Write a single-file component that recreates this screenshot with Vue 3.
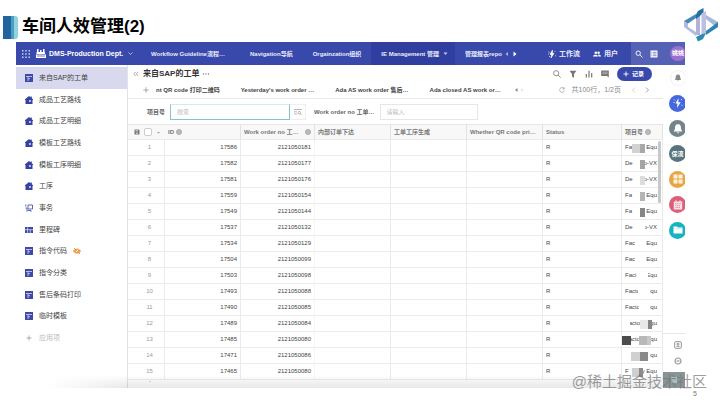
<script setup>
import { ref } from 'vue'

const menu = [
  { label: '来自SAP的工单', icon: 'table' },
  { label: '成品工艺路线', icon: 'house' },
  { label: '成品工艺明细', icon: 'house' },
  { label: '模板工艺路线', icon: 'house' },
  { label: '模板工序明细', icon: 'house' },
  { label: '工序', icon: 'house' },
  { label: '事务', icon: 'cart' },
  { label: '里程碑', icon: 'board' },
  { label: '指令代码', icon: 'table', hidden: true },
  { label: '指令分类', icon: 'table' },
  { label: '售后条码打印', icon: 'table' },
  { label: '临时模板', icon: 'table' },
]
const active = ref(0)
const keyword = ref('')
const orderNo = ref('')

// Each mask is [x, width, colour] within the project cell.
const rows = [
  [17586, 2121050181, 'Fa', 'Equ', [[10, 8, '#d2d2d2'], [18, 5, '#a9a9a9']]],
  [17582, 2121050177, 'De', 'o-VX', [[18, 5, '#a4a4a4']]],
  [17581, 2121050176, 'De', 'o-VX', [[18, 5, '#dcdcdc']]],
  [17559, 2121050154, 'Fa', 'Equ', [[18, 5, '#b5b5b5']]],
  [17549, 2121050144, 'Fa', 'Equ', [[18, 5, '#868686']]],
  [17537, 2121050132, 'De', 'o-VX', [[16, 7, '#ffffff']]],
  [17534, 2121050129, 'Fac', 'Equ', []],
  [17504, 2121050099, 'Fac', 'Equ', []],
  [17503, 2121050098, 'Faci', 'Equ', [[23, 3, '#ffffff']]],
  [17493, 2121050088, 'Facto', 'Equ', [[16, 12, '#ffffff']]],
  [17490, 2121050085, 'Facto', 'Equ', [[0, 3, '#ffffff'], [17, 11, '#ffffff']]],
  [17489, 2121050084, 'Facto', 'Equ', [[0, 8, '#ffffff'], [18, 8, '#e8e8e8'], [26, 4, '#858585']]],
  [17485, 2121050080, 'Facto', 'Equ', [[0, 9, '#4b4b4b'], [17, 8, '#b9b9b9'], [25, 4, '#c9c9c9']]],
  [17471, 2121050086, '', 'Equ', [[9, 9, '#d0d0d0'], [18, 8, '#8a8a8a'], [26, 2, '#ffffff']]],
  [17465, 2121050080, 'F', 'y Equ', [[10, 7, '#cfcfcf'], [17, 4, '#8c8c8c']]],
]
</script>

<template>
  <div class="slide">
    <header class="slide-head">
      <span class="strip"></span>
      <h1>车间人效管理(2)</h1>
      <svg class="logo" viewBox="0 0 34 34" aria-hidden="true">
        <path d="M0 13 4 15v4l8 5v4L0 19z" fill="#b3bbdd" />
        <path d="M0 13 12 6v4L4 15.500z" fill="#4489b8" />
        <path d="M12 7h4v20h-4z" fill="#b1b4da" />
        <path d="M12 6.500 14 3l5.500-3v5L12 11z" fill="#256f9f" />
        <path d="M17.500 5.500 22 3v22l-4.500 3z" fill="#bcc0e2" />
        <path d="M22 7 34 14v2l-4 1.500-8-6.500z" fill="#aab7dc" />
        <path d="M34 14v5l-12 8v-4l8-6z" fill="#2f83b0" />
        <path d="M12 29 17 26.500 22 25l-3 6-5 2.500z" fill="#2e8bad" />
      </svg>
    </header>

    <div class="app">
      <div class="topbar">
        <div class="brand">
          <svg class="i8" viewBox="0 0 8 8" fill="#c9cef0"><path d="M0 0h1.500v1.500H0zM3.200 0h1.500v1.500H3.200zM6.500 0H8v1.500H6.500zM0 3.200h1.500v1.500H0zM3.200 3.200h1.500v1.500H3.200zM6.500 3.200H8v1.500H6.500zM0 6.500h1.500V8H0zM3.200 6.500h1.500V8H3.200zM6.500 6.500H8V8H6.500z" /></svg>
          <svg class="i10" viewBox="0 0 10 10"><path d="M1 0h1.500v3H4V1h1.500v2H7V0h1.500v3H9v2H.5V3H1zM0 5.500h10V9H0z" fill="#fff" /><path d="M2 6v2M4 6v2M6 6v2M8 6v2" stroke="#3949ab" stroke-width=".7" /></svg>
          <strong>DMS-Production Dept.</strong>
          <svg class="i5" viewBox="0 0 5 5"><path d="M.5 1.500 2.500 3.500 4.500 1.500" fill="none" stroke="#cfd3f2" stroke-width=".8" /></svg>
        </div>
        <nav class="tabs">
          <a href="#" class="wide">Workflow Guideline流程…</a>
          <a href="#">Navigation导航</a>
          <a href="#">Orgainzation组织</a>
          <a href="#" class="on">IE Management 管理<svg class="i5" viewBox="0 0 5 5"><path d="M.5 1.500h4L2.500 4z" fill="#c3c8ec" /></svg></a>
          <a href="#" class="last">管理报表repo</a>
          <svg class="arrows" viewBox="0 0 12 6"><path d="M3 1v4L.5 3z" fill="#aeb5e2" /><path d="M8.500.5v5l3-2.500z" fill="#fff" /></svg>
        </nav>
        <a href="#" class="tool"><svg class="i8" viewBox="0 0 8 8"><path d="M4.500 0 2 4.500h1.500L3 8l3-4.700H4.400zM.2 1.800l1.500.7M0 4h1M1 7l1-1M6.500 2 7.500 1M7 5.500l1 .6" fill="#fff" stroke="#fff" stroke-width=".6" /></svg>工作流</a>
        <a href="#" class="tool"><svg class="i8" viewBox="0 0 8 8" fill="#fff"><circle cx="2.800" cy="2.700" r="1.300" /><circle cx="5.600" cy="2.700" r="1.200" /><path d="M0 6.500c0-2.500 5-2.500 5 0zM5.500 6.500c0-1-.3-1.600-.8-2C6.500 4.200 8 5 8 6.500z" /></svg>用户</a>
        <div class="account">
          <button aria-label="搜索"><svg class="i8" viewBox="0 0 8 8" fill="none" stroke="#fff" stroke-width=".9"><circle cx="3.200" cy="3.200" r="2.200" /><path d="M5 5l2.500 2.500" /></svg></button>
          <button aria-label="列表"><svg class="i8" viewBox="0 0 8 8"><path d="M.5.5h7v7h-7z" fill="#fff" /><path d="M3 2.300h3.500M3 4h3.500M3 5.700h3.500M1.300 2.300h1M1.300 4h1M1.300 5.700h1" stroke="#5561b4" stroke-width=".7" /></svg></button>
          <span class="clip"><span class="avatar">姚姚</span></span>
        </div>
      </div>

      <div class="body">
        <aside class="side">
          <ul>
            <li v-for="(m, i) in menu" :key="i">
              <button :class="{ on: active === i }" @click="active = i">
                <svg v-if="m.icon === 'table'" class="i8" viewBox="0 0 8 8"><path d="M0 0h8v8H0z" fill="#3f4aa8" /><path d="M1 2.500h6M3 2.500V7M3 4.700h2" stroke="#d4d7f0" stroke-width=".8" /></svg>
                <svg v-else-if="m.icon === 'house'" class="i8" viewBox="0 0 8 8"><path d="M4 0 5.500 1.200V.5h1.300v1.700L8 3.200V4h-.5v4H.5V4H0v-.8z" fill="#3643a0" /><path d="M4.200 4h1.500v2H4.200z" fill="#dfe2f6" /></svg>
                <svg v-else-if="m.icon === 'cart'" class="i8" viewBox="0 0 8 8" fill="none" stroke="#4c57ae" stroke-width=".9"><path d="M.8.5v2M.5 4h1.500v3.500M3 1h4.500v4H3zM2.500 6.500H6v1.300" /></svg>
                <svg v-else class="i8" viewBox="0 0 8 8"><path d="M0 1h8v6H0z" fill="#3f4aa8" /><path d="M0 3.700h8M2.600 1.500V7M5.300 3.700V7" stroke="#e4e6f7" stroke-width=".7" /></svg>
                <span>{{ m.label }}</span>
                <svg v-if="m.hidden" class="i8" viewBox="0 0 8 8"><path d="M0 4c2-3.500 6-3.500 8 0C6 7.500 2 7.500 0 4z" fill="#f0a04a" /><circle cx="4" cy="4" r="1.200" fill="#fff" /><path d="M1 1l6 6" stroke="#d98220" stroke-width=".8" /></svg>
              </button>
            </li>
            <li>
              <button class="add"><svg class="i8" viewBox="0 0 8 8"><path d="M4 1.500v5M1.500 4h5" stroke="#999" stroke-width=".8" /></svg><span>应用项</span></button>
            </li>
          </ul>
        </aside>

        <main class="main">
          <div class="title-row">
            <svg class="i6" viewBox="0 0 6 6"><path d="M2.800.8.8 3l2 2.200M5.300.8l-2 2.200 2 2.200" fill="none" stroke="#888" stroke-width=".7" /></svg>
            <h2>来自SAP的工单</h2>
            <svg class="i8" viewBox="0 0 8 8" fill="#777"><circle cx="1.500" cy="4" r=".7" /><circle cx="4" cy="4" r=".7" /><circle cx="6.500" cy="4" r=".7" /></svg>
            <div class="tools">
              <svg class="i8" viewBox="0 0 8 8" fill="none" stroke="#777" stroke-width=".8"><circle cx="3.200" cy="3.200" r="2.600" /><path d="M5 5l2.700 2.700" /></svg>
              <svg class="i8" viewBox="0 0 8 8"><path d="M.5.800h7L5 4v3.700L3 6.500V4z" fill="#777" /></svg>
              <svg class="i8" viewBox="0 0 8 8"><path d="M1.300 7.500V4M4 7.500V.8M6.700 7.500V3" stroke="#777" stroke-width="1.200" /></svg>
              <svg class="i8" viewBox="0 0 8 8"><path d="M.2.500h7.600v7L6 6H.2z" fill="#777" /><path d="M1.500 2.200h5M1.500 3.600h5" stroke="#ddd" stroke-width=".5" /></svg>
              <button class="record"><svg class="i6" viewBox="0 0 6 6"><path d="M3 .5v5M.5 3h5" stroke="#fff" stroke-width=".9" /></svg>记录</button>
            </div>
          </div>

          <div class="views">
            <button class="plus" aria-label="新视图"><svg class="i6" viewBox="0 0 6 6"><path d="M3 .3v5.400M.3 3h5.400" stroke="#777" stroke-width=".6" /></svg></button>
            <a href="#">nt QR code 打印二维码</a>
            <a href="#">Yesterday's work order …</a>
            <a href="#">Ada AS work order 售后…</a>
            <a href="#">Ada closed AS work or…</a>
            <svg class="varrows" viewBox="0 0 10 6"><path d="M3.500 1v4L1 3z" fill="#888" /><path d="M7.500 1.500v3L9 3z" fill="#ccc" /></svg>
            <div class="pager">
              <svg class="i6" viewBox="0 0 6 6"><path d="M5 1.500A2.400 2.400 0 1 0 5.400 3.500M5.300.3v1.700H3.600" fill="none" stroke="#888" stroke-width=".6" /></svg>
              <span>共100行，1/2页</span>
              <button aria-label="上一页"><svg class="i6" viewBox="0 0 6 6"><path d="M4 .5 1.500 3 4 5.500" fill="none" stroke="#bbb" stroke-width=".6" /></svg></button>
              <button aria-label="下一页"><svg class="i6" viewBox="0 0 6 6"><path d="M2 .5 4.500 3 2 5.500" fill="none" stroke="#666" stroke-width=".6" /></svg></button>
            </div>
          </div>

          <form class="filters" @submit.prevent>
            <label for="kw">项目号</label>
            <input id="kw" v-model="keyword" class="focus" placeholder="搜索">
            <button class="mode" aria-label="匹配方式"><svg class="i8" viewBox="0 0 8 8" fill="none" stroke="#888" stroke-width=".6"><path d="M0 1.500h8M0 3.800h3M0 6h3" /><circle cx="5.300" cy="4.700" r="1.300" /><path d="M6.300 5.700 7.600 7" /></svg></button>
            <label for="wo">Work order no 工单…</label>
            <input id="wo" v-model="orderNo" class="second" placeholder="请输入">
          </form>

          <table>
            <colgroup>
              <col class="c-num"><col class="c-id"><col class="c-wo"><col class="c-id"><col class="c-id"><col class="c-id"><col class="c-st"><col>
            </colgroup>
            <thead>
              <tr>
                <th class="pick">
                  <span>
                    <svg class="i6" viewBox="0 0 6 6"><path d="M.5.500h4l1 1v4h-5z" fill="#777" /><path d="M1.500 1.800h2.500M2 4.200h2" stroke="#fff" stroke-width=".8" /></svg>
                    <input type="checkbox" aria-label="全选">
                    <svg class="i5" viewBox="0 0 5 5"><path d="M1 2h3L2.500 3.500z" fill="#999" /></svg>
                  </span>
                </th>
                <th>ID <i class="info"></i></th>
                <th class="spread"><span>Work order no 工… <i class="info"></i></span></th>
                <th>内部订单下达</th>
                <th>工单工序生成</th>
                <th>Whether QR code pri…</th>
                <th>Status</th>
                <th>项目号 <i class="info"></i></th>
              </tr>
            </thead>
            <tbody>
              <tr v-for="(r, i) in rows" :key="i">
                <td class="idx">{{ i + 1 }}</td>
                <td class="num">{{ r[0] }}</td>
                <td class="num wo">{{ r[1] }}</td>
                <td></td>
                <td></td>
                <td></td>
                <td>R</td>
                <td class="proj">
                  <span>{{ r[2] }}</span><span class="end">{{ r[3] }}</span>
                  <svg viewBox="0 0 41 15"><rect v-for="(b, k) in r[4]" :key="k" :x="b[0]" y="4" :width="b[1]" height="9" :fill="b[2]" /></svg>
                </td>
              </tr>
            </tbody>
          </table>
          <div class="foot">-</div>
          <div class="scrollbar"></div>
        </main>

        <aside class="rail">
          <div class="dots">
            <span class="bell"><svg class="i8" viewBox="0 0 8 8" fill="#888"><path d="M4 .5c2 0 2.300 1.500 2.300 3.500L7 6H1l.7-2C1.700 2 2 .5 4 .5zM3.200 6.500h1.600L4 7.500z" /></svg></span>
            <span class="dot blue"><svg class="i10" viewBox="0 0 10 10"><path d="M5.500 0 2.500 5.500h2L4 10l3.700-5.800H5.300z" fill="#fff" /><path d="M1 1.500 2 2.500M.5 4.500h1.200M8 2l1-1M8.500 7l1 .5" stroke="#fff" stroke-width=".8" /></svg></span>
            <span class="dot slate"><svg class="i10" viewBox="0 0 10 10" fill="#fff"><path d="M5 .3c2.600 0 3 2 3 4.500l1.200 2.700H.8L2 4.800C2 2.300 2.400.3 5 .3zM3.800 8.200h2.400L5 9.700z" /></svg></span>
            <span class="dot teal">保流</span>
            <span class="dot orange"><svg class="i10" viewBox="0 0 10 10" fill="#fff4dd"><path d="M.5.5h4v4h-4zM5.500.5h4v4h-4zM.5 5.500h4v4h-4zM5.500 5.500h4v4h-4z" /></svg></span>
            <span class="dot pink"><svg class="i10" viewBox="0 0 10 10"><path d="M.8 1.500h8.400v8H.8zM2.500.3h1v2h-1zM6.500.3h1v2h-1z" fill="#fbe3e8" /><path d="M2 3.600h6M2.500 5.500h5M2.500 7.500h5" stroke="#d9586f" stroke-width=".7" stroke-dasharray="1 .7" /></svg></span>
            <span class="dot cyan"><svg class="i10" viewBox="0 0 10 10"><path d="M.5 1.500h3.500l1 1h4.500V8.500h-9z" fill="#fff" /><path d="M1.500 3.700h7" stroke="#9adfe6" stroke-width=".6" /></svg></span>
          </div>
          <div class="rail-foot">
            <svg class="i8" viewBox="0 0 8 8" fill="none" stroke="#888" stroke-width=".9"><rect x=".7" y=".7" width="6.600" height="6.600" rx="1" /><circle cx="4" cy="3.200" r="1" /><path d="M2.300 6c.5-1.300 2.900-1.300 3.400 0" /></svg>
            <svg class="i8" viewBox="0 0 8 8" fill="none" stroke="#999" stroke-width="1.200"><circle cx="4" cy="4" r="3" /><path d="M2.500 4h3" /></svg>
            <span class="block"><svg class="i8" viewBox="0 0 8 8"><path d="M1 1h6v6H1z" fill="#aebabc" /></svg></span>
          </div>
        </aside>
      </div>
      <div class="fade"></div>
    </div>
    <div class="watermark">@稀土掘金技术社区</div>
    <div class="page-no">5</div>
  </div>
</template>

<style>
body {
  margin: 0;
  background: #fff;
}
</style>

<style scoped>
* {
  box-sizing: border-box;
}
.slide {
  position: relative;
  min-height: 100vh;
  overflow: hidden;
  font-family: "Liberation Sans", "Noto Sans CJK SC", sans-serif;
  font-size: 6px;
  line-height: 8px;
  color: #444;
}
button,
input {
  font: inherit;
  color: inherit;
  margin: 0;
  padding: 0;
  border: 0;
  background: none;
}
button {
  display: flex;
  align-items: center;
}
a {
  color: inherit;
  text-decoration: none;
}
svg {
  display: block;
  flex: none;
}
.i5 { width: 5px; height: 5px; }
.i6 { width: 6px; height: 6px; }
.i8 { width: 8px; height: 8px; }
.i10 { width: 10px; height: 10px; }

.slide-head {
  display: flex;
  align-items: flex-end;
  height: 42px;
  padding: 0 2px 0 3px;
  gap: 4px;
}
.strip {
  width: 15px;
  height: 23px;
  margin-bottom: 3px;
  border-radius: 0 3px 3px 0;
  background: linear-gradient(90deg, #22659c 0 8px, #4a9fc0 8px 11px, #8fd2e0 11px);
}
h1 {
  margin: 0 0 3px;
  font-size: 17px;
  line-height: 24px;
  font-weight: 700;
  color: #000;
}
.logo {
  width: 34px;
  height: 34px;
  margin-left: auto;
}

.app {
  position: relative;
  margin: 0 35px 0 16px;
}
.topbar {
  display: flex;
  height: 23px;
  background: #3949ab;
  color: #e9ebfa;
  font-weight: 700;
}
.brand {
  display: flex;
  align-items: center;
  width: 125px;
  padding-left: 6px;
}
.brand strong {
  margin: 0 5px 0 3px;
  font-size: 7px;
  color: #fff;
}
.brand .i10 {
  margin-left: 6px;
}
.tabs {
  display: flex;
  align-items: center;
  flex: 1;
  white-space: nowrap;
}
.tabs a {
  display: flex;
  align-items: center;
  height: 100%;
  padding: 0 10px;
}
.tabs .wide {
  min-width: 99px;
}
.tabs .on {
  background: #303f9f;
  gap: 4px;
  padding-right: 7px;
}
.tabs .last {
  padding-right: 3px;
}
.arrows {
  width: 12px;
  height: 6px;
}
.tool {
  display: flex;
  align-items: center;
  gap: 3px;
  margin-right: 13px;
  font-size: 7px;
}
.account {
  display: flex;
  align-items: center;
  width: 54px;
  padding-left: 4px;
  gap: 7px;
  background: #5561b4;
}
.clip {
  flex: 1;
  overflow: hidden;
  margin-left: 5px;
}
.avatar {
  display: block;
  width: 16px;
  height: 15px;
  border-radius: 8px;
  background: #9a6fd0;
  color: #fff;
  line-height: 14px;
  text-align: center;
}

.body {
  display: flex;
}
.side {
  width: 112px;
  padding-top: 2px;
  border-right: 1px solid #e3e3e6;
}
ul {
  display: grid;
  grid-auto-rows: 1fr;
  min-height: 282px;
  margin: 0;
  padding: 0;
  list-style: none;
}
.side button {
  width: 100%;
  height: 100%;
  padding-left: 9px;
  gap: 6px;
  font-size: 7px;
  color: #444;
}
.side .on {
  background: #d8d9ee;
}
.side .add {
  color: #bbb;
}

.main {
  position: relative;
  flex: 1;
  min-width: 0;
}
.title-row {
  display: flex;
  align-items: center;
  height: 17px;
  padding: 0 11px 0 5px;
}
h2 {
  margin: 0 3px 0 4px;
  font-size: 8px;
  line-height: 12px;
  font-weight: 700;
  color: #333;
}
.tools {
  display: flex;
  align-items: center;
  gap: 8px;
  margin-left: auto;
}
.record {
  height: 14px;
  padding: 0 8px 0 6px;
  gap: 3px;
  border-radius: 7px;
  background: #3949ab;
  color: #fff;
  font-weight: 700;
}
.views {
  display: flex;
  align-items: center;
  height: 17px;
  padding: 0 13px 0 15px;
  gap: 21px;
  border-bottom: 1px solid #e8e8e8;
  font-weight: 700;
  color: #444;
  white-space: nowrap;
}
.plus {
  margin-right: -14px;
}
.varrows {
  width: 10px;
  height: 6px;
  margin-left: -8px;
}
.pager {
  display: flex;
  align-items: center;
  gap: 7px;
  margin-left: auto;
  font-size: 7px;
  font-weight: 400;
  color: #888;
}
.pager span {
  margin-right: 3px;
}
.filters {
  display: flex;
  align-items: center;
  height: 25px;
  padding-left: 19px;
  color: #666;
}
.filters label {
  margin-right: 5px;
  font-weight: 700;
}
.filters input {
  height: 16px;
  width: 120px;
  padding: 0 6px;
  border: 1px solid #e6e6e6;
}
.filters .focus {
  border-color: #86c3cb;
  border-top-color: #d5eaed;
}
.filters .second {
  width: 98px;
}
.filters input::placeholder {
  color: #bbb;
}
.mode {
  width: 16px;
  height: 16px;
  margin-right: 8px;
  padding-left: 4px;
  border: 1px solid #eee;
  border-left: 0;
}

table {
  width: 100%;
  table-layout: fixed;
  border-spacing: 0;
}
.c-num { width: 37px; }
.c-id { width: 76px; }
.c-wo { width: 74px; }
.c-st { width: 79px; }
th,
td {
  height: 16px;
  padding: 0 3px;
  line-height: 15px;
  border-bottom: 1px solid #ebebeb;
  border-right: 1px solid #ebebeb;
  text-align: left;
  white-space: nowrap;
  overflow: hidden;
}
th {
  background: #f8f8f8;
  color: #777;
  border-top: 1px solid #e6e6e6;
  border-right-color: #e2e2e2;
  line-height: 14px;
}
.pick {
  border-right: 0;
}
.pick span {
  display: flex;
  align-items: center;
  gap: 4px;
  padding-left: 3px;
}
.pick input {
  appearance: none;
  width: 8px;
  height: 8px;
  border: 1px solid #ccc;
  border-radius: 2px;
  background: #fff;
}
.info {
  display: inline-block;
  width: 6px;
  height: 6px;
  border: 1px solid #aaa;
  border-radius: 50%;
  background: #bbb;
  vertical-align: middle;
}
.spread span {
  display: flex;
  align-items: center;
  justify-content: space-between;
}
.idx {
  padding-left: 10px;
  text-align: center;
  color: #999;
}
.num {
  text-align: right;
}
.wo {
  border-right-color: #f5f5f5;
}
.proj {
  position: relative;
}
.proj .end {
  float: right;
  padding-right: 2px;
}
.proj svg {
  position: absolute;
  left: 0;
  top: 0;
  width: 41px;
  height: 15px;
}
.foot {
  height: 8px;
  line-height: 3px;
  padding-left: 21px;
  color: #999;
}
.scrollbar {
  position: absolute;
  right: 2px;
  top: 76px;
  width: 3px;
  height: 62px;
  border-radius: 2px;
  background: #c8c8c8;
}

.rail {
  display: flex;
  flex-direction: column;
  width: 22px;
  overflow: hidden;
}
.dots {
  display: grid;
  grid-auto-rows: 1fr;
  align-items: center;
  min-height: 178px;
}
.bell {
  display: flex;
  justify-content: center;
  align-items: center;
  width: 16px;
  height: 16px;
  margin-left: 7px;
  border-radius: 50%;
  border: 1px solid #f0f0f0;
}
.dot {
  display: flex;
  justify-content: center;
  align-items: center;
  width: 17px;
  height: 17px;
  margin-left: 6px;
  border-radius: 50%;
  color: #fff;
  font-weight: 700;
}
.blue { background: #4668dc; }
.slate { background: #73848d; }
.teal { background: #56747c; }
.orange { background: #e9a545; }
.pink { background: #dc5f78; }
.cyan { background: #16b3c2; }
.rail-foot {
  display: flex;
  flex-direction: column;
  align-items: center;
  width: 100%;
  gap: 8px;
  margin-top: auto;
  padding: 7px 0 0 8px;
  border-top: 1px solid #e6e6e6;
}
.block {
  display: flex;
  justify-content: center;
  align-items: center;
  align-self: stretch;
  height: 16px;
  margin: -1px 0 0 -8px;
  background: #879597;
}

.fade {
  position: absolute;
  left: 32px;
  right: 22px;
  bottom: 0;
  height: 13px;
  background: linear-gradient(90deg, #fff, #fff0 80px), linear-gradient(#0000, #00000018);
  pointer-events: none;
}
.watermark {
  position: absolute;
  right: 13px;
  bottom: 13px;
  font-size: 15px;
  line-height: 20px;
  color: #777b;
}
.page-no {
  position: absolute;
  right: 23px;
  bottom: 7px;
  font-size: 7px;
  line-height: 8px;
  color: #777;
}
</style>
